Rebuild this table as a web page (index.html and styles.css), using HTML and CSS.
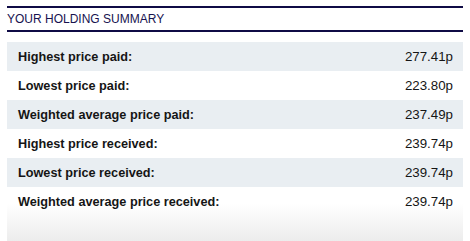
FILE: index.html
```html
<!DOCTYPE html>
<html>
<head>
<meta charset="utf-8">
<link rel="stylesheet" href="styles.css">
</head>
<body>
<div class="summary">
  <div class="summary-title">YOUR HOLDING SUMMARY</div>
  <div class="summary-list">
    <div class="row shaded"><span class="label">Highest price paid:</span><span class="value">277.41p</span></div>
    <div class="row"><span class="label">Lowest price paid:</span><span class="value">223.80p</span></div>
    <div class="row shaded"><span class="label">Weighted average price paid:</span><span class="value">237.49p</span></div>
    <div class="row"><span class="label">Highest price received:</span><span class="value">239.74p</span></div>
    <div class="row shaded"><span class="label">Lowest price received:</span><span class="value">239.74p</span></div>
    <div class="row"><span class="label">Weighted average price received:</span><span class="value">239.74p</span></div>
  </div>
</div>
</body>
</html>
```
FILE: styles.css
```css
html, body {
  margin: 0;
  padding: 0;
  background: #ffffff;
}
body {
  font-family: "Liberation Sans", Arial, sans-serif;
  color: #151515;
}
.summary {
  margin: 6px 0 0 7px;
  width: 456px;
}
.summary-title {
  border-top: 2px solid #0f0b45;
  border-bottom: 2px solid #0f0b45;
  height: 22px;
  line-height: 22px;
  font-size: 12px;
  color: #17124f;
}
.summary-list {
  margin-top: 10px;
  padding-bottom: 25px;
  background: linear-gradient(to bottom, #ffffff 0, #ffffff 162px, #ececec 199px);
}
.row {
  display: flex;
  justify-content: space-between;
  align-items: center;
  height: 29px;
  padding: 0 10px 0 11px;
  font-size: 13px;
}
.row.shaded {
  background: #e9eef2;
}
.label {
  font-weight: bold;
  font-size: 12.7px;
}
.value {
  font-weight: normal;
  font-size: 13.3px;
}
```
